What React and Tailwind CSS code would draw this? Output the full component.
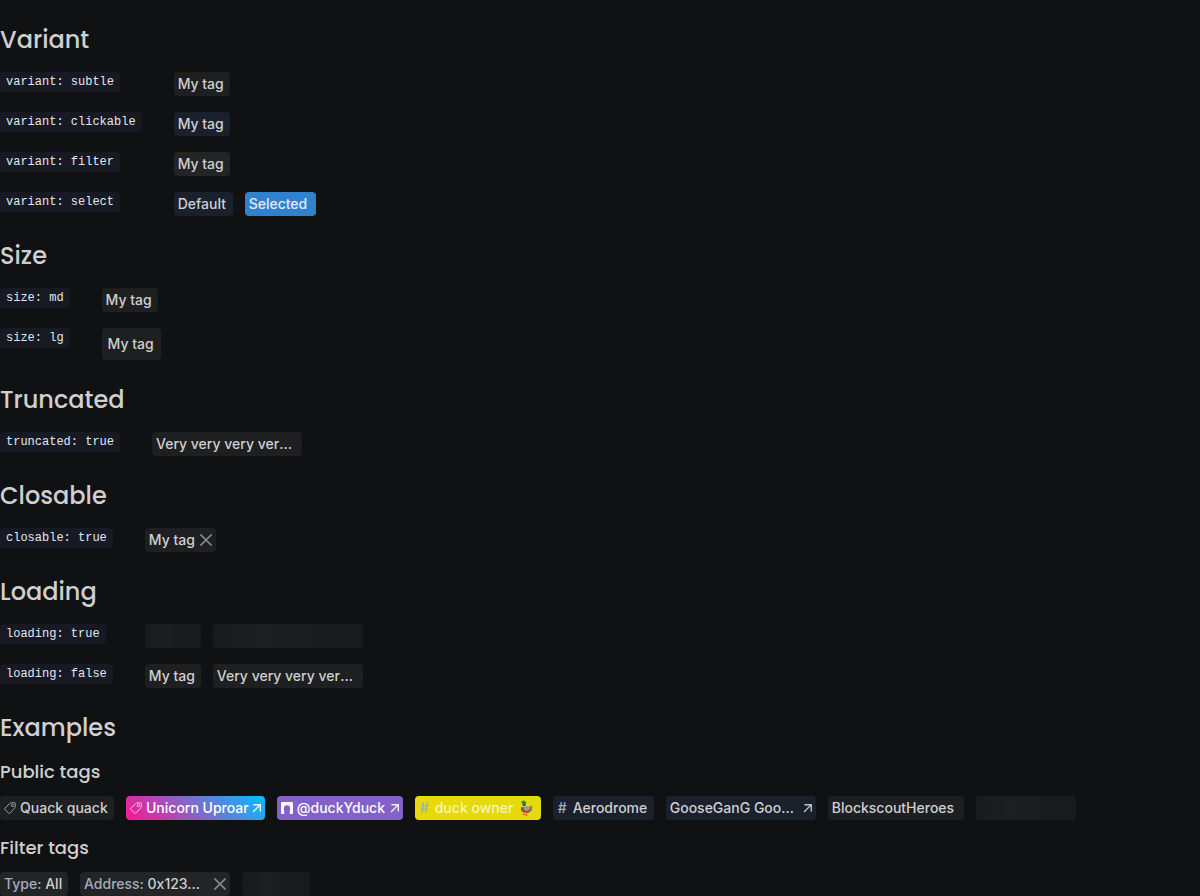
import React from "react";

const SURFACES = {
  subtle: "bg-[#1d1f20] text-[#cfcfd0]",
  clickable: "bg-[#1a202c] text-[#cfd0d2]",
  filter: "bg-[#232425] text-[#cfcfd0]",
  selected: "bg-[#3182ce] text-[#e0ebf6]",
  gradient: "bg-[linear-gradient(45deg,#ff1493_0%,#00bfff_100%)] text-white",
  purple: "bg-[#8362c8] text-[#fafafc]",
  yellow: "bg-[#e6da0b] text-[#f8f4b4]",
};

const WIDTHS = {
  xs: "min-w-14",
  sm: "min-w-[59px]",
  md: "min-w-17",
  lg: "min-w-[71px]",
  xl: "min-w-[101px]",
  "2xl": "min-w-[114px]",
  "3xl": "min-w-[126px]",
  "4xl": "min-w-[136px]",
};

const SKELETONS = {
  short: "w-14",
  medium: "w-17",
  long: "w-25",
  full: "w-[150px]",
};

function TagIcon() {
  return (
    <svg className="mr-1 size-3 shrink-0 opacity-80" viewBox="0 0 12 12" fill="none" stroke="currentColor" strokeWidth="0.9" strokeLinejoin="round" aria-hidden="true">
      <path d="M6.6 1 10.3.7Q11.4.7 11.4 1.8L11 5.3Q11 5.8 10.6 6.2L5.7 11.1Q5.1 11.7 4.5 11.1L.9 7.5Q.3 6.9.9 6.3L5.7 1.5Q6.1 1.1 6.6 1Z" />
      <circle cx="8.4" cy="3.5" r="1.1" />
    </svg>
  );
}

function ArrowIcon() {
  return (
    <svg className="size-3 shrink-0 opacity-90" viewBox="0 0 12 12" fill="none" stroke="currentColor" strokeWidth="1.4" aria-hidden="true">
      <path d="M4.4 2.7h6.9v6.9M11 3 4 10" />
    </svg>
  );
}

function ArchIcon() {
  return (
    <svg className="mr-1 size-3 shrink-0" viewBox="0 0 12 12" fill="currentColor" aria-hidden="true">
      <path d="M1.2 0h9.6Q12 0 12 1.2v9.6Q12 12 10.8 12H9.4q-.6 0-.6-.6V9.6q0-.6.3-1.1V6.4a3.1 3.1 0 0 0-6.2 0v2.1q.3.5.3 1.1v1.8q0 .6-.6.6H1.2Q0 12 0 10.8V1.2Q0 0 1.2 0Z" />
    </svg>
  );
}

function Tag({ children, variant = "subtle", width = "xs", large, truncated, icon, hash, link, closable, label }) {
  const Element = variant === "clickable" || variant === "selected" ? "button" : "span";
  const content = (
    <>
      {icon}
      {hash && <span className="w-4 shrink-0 pl-px text-left text-[#a0aec0]">#</span>}
      <span className="min-w-0 grow truncate text-left">
        {label && <span className="text-[#a0aec0]">{label}: </span>}
        {children}
      </span>
      {link && <ArrowIcon />}
      {closable && (
        <button type="button" aria-label={`Remove ${children}`} className="ml-1 size-3 shrink-0 text-[#868788]">
          <svg className="size-3" viewBox="0 0 12 12" fill="none" stroke="currentColor" strokeWidth="1.6" aria-hidden="true">
            <path d="M.4.4l11.2 11.2M11.6.4.4 11.6" />
          </svg>
        </button>
      )}
    </>
  );
  const className = `inline-flex items-center rounded-[4px] text-sm font-medium leading-5 ${large ? "h-8 px-1.5" : "h-6 px-1"} ${truncated ? "w-[150px]" : WIDTHS[width]} ${SURFACES[variant]}`;
  if (link) {
    return <a href="#" className={className}>{content}</a>;
  }
  return <Element className={className}>{content}</Element>;
}

function Skeleton({ size }) {
  return (
    <span className={`h-6 rounded-[4px] bg-linear-to-r from-[#191a1b] via-[#1d1e1f] via-35% to-[#191a1b] to-75% ${SKELETONS[size]}`} />
  );
}

function Row({ label, children }) {
  return (
    <>
      <dt className="flex items-start">
        <code className="h-5 rounded-[4px] bg-[#171923] px-1.5 font-['Liberation_Mono',monospace] text-xs leading-5 text-[#e2e8f0]">{label}</code>
      </dt>
      <dd className="flex gap-3">{children}</dd>
    </>
  );
}

function Section({ title, children }) {
  return (
    <section>
      <h2 className="mb-4 font-[Poppins,Inter,sans-serif] text-2xl leading-8 font-medium">{title}</h2>
      {children}
    </section>
  );
}

function Samples({ children }) {
  return <dl className="grid grid-cols-[max-content_1fr] gap-x-8 gap-y-4">{children}</dl>;
}

function Example({ title, children }) {
  return (
    <section>
      <h3 className="mb-3 font-[Poppins,Inter,sans-serif] text-lg leading-6 font-medium">{title}</h3>
      <div className="flex flex-wrap gap-3">{children}</div>
    </section>
  );
}

export default function App() {
  return (
    <main className="flex min-h-screen flex-col gap-6 bg-[#101112] pt-6 font-[Inter,sans-serif] text-[#cfcfd0]">
      <Section title="Variant">
        <Samples>
          <Row label="variant: subtle"><Tag>My tag</Tag></Row>
          <Row label="variant: clickable"><Tag variant="clickable">My tag</Tag></Row>
          <Row label="variant: filter"><Tag variant="filter">My tag</Tag></Row>
          <Row label="variant: select">
            <Tag variant="clickable" width="sm">Default</Tag>
            <Tag variant="selected" width="lg">Selected</Tag>
          </Row>
        </Samples>
      </Section>
      <Section title="Size">
        <Samples>
          <Row label="size: md"><Tag>My tag</Tag></Row>
          <Row label="size: lg"><Tag large width="sm">My tag</Tag></Row>
        </Samples>
      </Section>
      <Section title="Truncated">
        <Samples>
          <Row label="truncated: true"><Tag truncated>Very very very very long tag</Tag></Row>
        </Samples>
      </Section>
      <Section title="Closable">
        <Samples>
          <Row label="closable: true"><Tag closable width="lg">My tag</Tag></Row>
        </Samples>
      </Section>
      <Section title="Loading">
        <Samples>
          <Row label="loading: true">
            <Skeleton size="short" />
            <Skeleton size="full" />
          </Row>
          <Row label="loading: false">
            <Tag>My tag</Tag>
            <Tag truncated>Very very very very long tag</Tag>
          </Row>
        </Samples>
      </Section>
      <Section title="Examples">
        <div className="flex flex-col gap-4">
          <Example title="Public tags">
            <Tag width="2xl" icon={<TagIcon />}>Quack quack</Tag>
            <Tag width="4xl" variant="gradient" icon={<TagIcon />} link>Unicorn Uproar</Tag>
            <Tag width="3xl" variant="purple" icon={<ArchIcon />} link>@duckYduck</Tag>
            <Tag width="3xl" variant="yellow" hash>duck owner 🦆</Tag>
            <Tag width="xl" variant="clickable" hash>Aerodrome</Tag>
            <Tag variant="clickable" truncated link>GooseGanG GooseGanG</Tag>
            <Tag width="4xl">BlockscoutHeroes</Tag>
            <Skeleton size="long" />
          </Example>
          <Example title="Filter tags">
            <Tag variant="filter" label="Type" width="md">All</Tag>
            <Tag variant="filter" label="Address" truncated closable>0x123...</Tag>
            <Skeleton size="medium" />
          </Example>
        </div>
      </Section>
    </main>
  );
}
